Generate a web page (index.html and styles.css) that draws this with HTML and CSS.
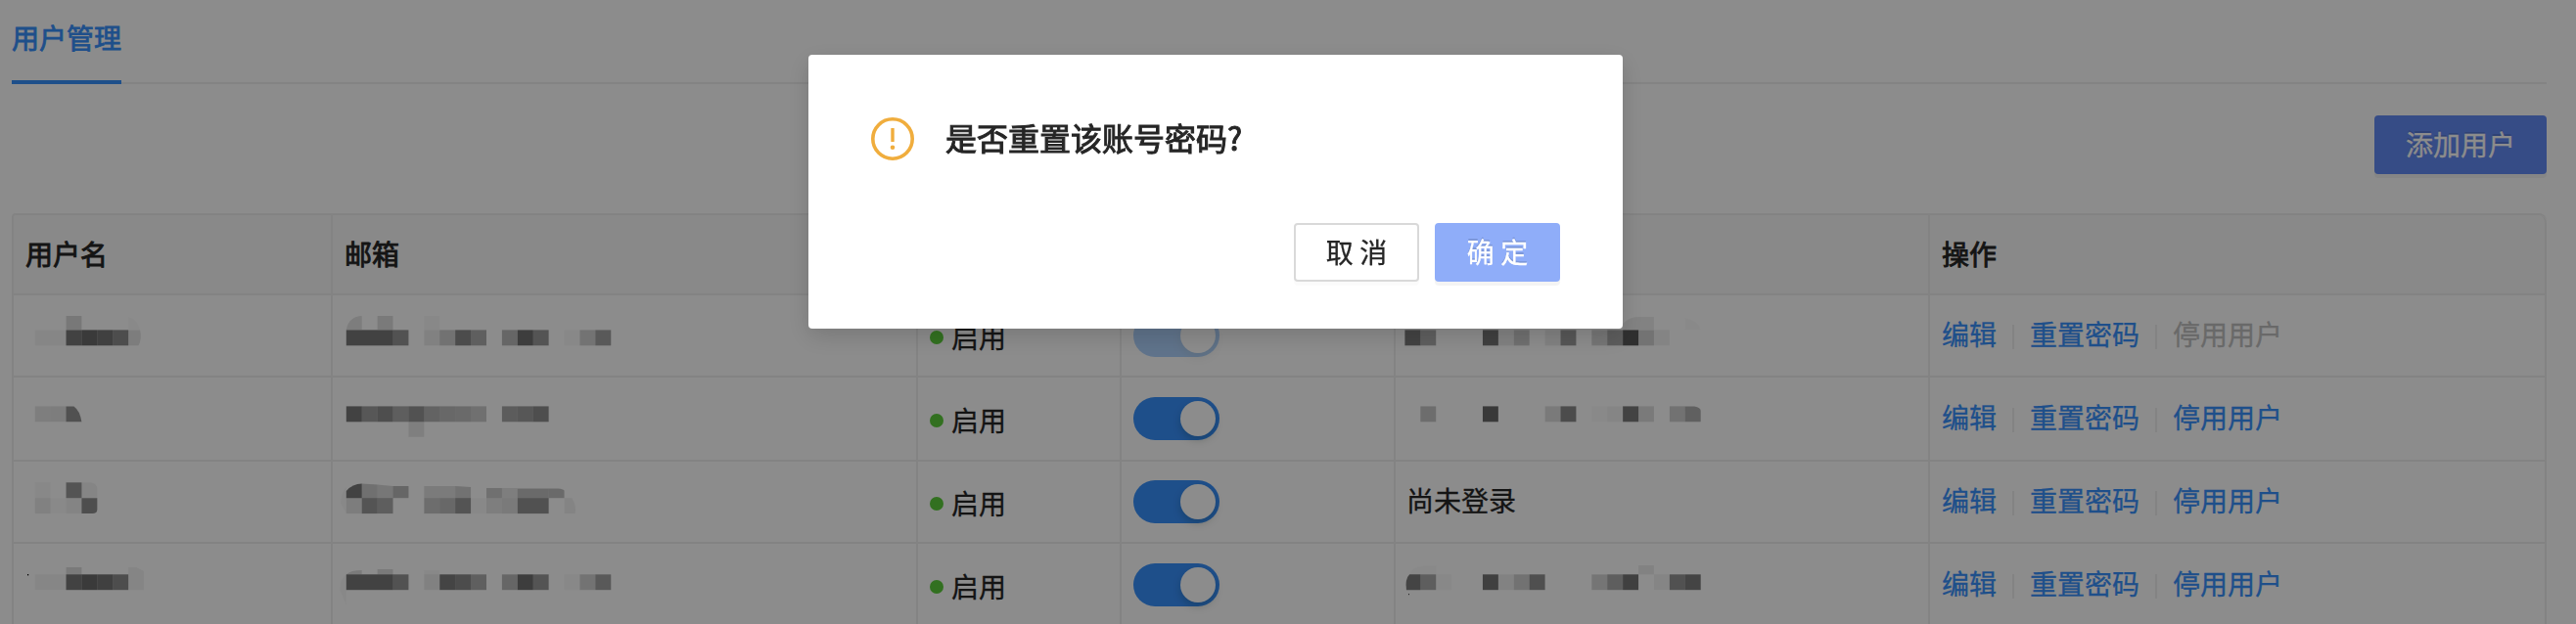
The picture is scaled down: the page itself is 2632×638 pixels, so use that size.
FILE: index.html
```html
<!DOCTYPE html>
<html lang="zh-CN">
<head>
<meta charset="utf-8">
<title>用户管理</title>
<link rel="stylesheet" href="styles.css">
</head>
<body>
<main class="page">
  <nav class="tabs"><a class="tab tab-active">用户管理</a></nav>
  <div class="toolbar"><button class="btn btn-add">添加用户</button></div>
  <section class="table">
    <div class="row row-head">
      <div class="cell">用户名</div><div class="cell">邮箱</div><div class="cell"></div><div class="cell"></div><div class="cell"></div><div class="cell">操作</div>
    </div>
    <div class="row">
      <div class="cell cell-masked"><svg class="mosaic" width="324" height="82" viewBox="14 302 324 82"><g transform="translate(35.7 0) scale(15.91 1)">
        <rect x="2" y="323" width="1" height="14" opacity=".14"/><path d="M6 324Q6.6 326 6.75 337H6z" opacity=".02"/>
        <rect x="0" y="337.4" width="2" height="15.9" opacity=".04"/><rect x="2" y="337.4" width="1" height="15.9" opacity=".53"/><rect x="3" y="337.4" width="1" height="15.9" opacity=".58"/><rect x="4" y="337.4" width="1" height="15.9" opacity=".54"/><rect x="5" y="337.4" width="1" height="15.9" opacity=".45"/><path d="M6 337.4H6.75Q6.88 346 6.65 353.3H6z" opacity=".11"/></g></svg></div>
      <div class="cell cell-masked"><svg class="mosaic" width="596" height="82" viewBox="340 302 596 82"><g transform="translate(353.8 0) scale(15.91 1)">
        <path d="M0 337C.1 328 .5 323 1 323V337z" opacity=".11"/><rect x="2" y="323" width="1" height="14" opacity=".13"/><rect x="5" y="323" width="1" height="14" opacity=".03"/>
        <rect x="0" y="337.4" width="3" height="15.9" opacity=".53"/><rect x="3" y="337.4" width="1" height="15.9" opacity=".41"/><rect x="5" y="337.4" width="1" height="15.9" opacity=".08"/><rect x="6" y="337.4" width="1" height="15.9" opacity=".19"/><rect x="7" y="337.4" width="1" height="15.9" opacity=".46"/><rect x="8" y="337.4" width="1" height="15.9" opacity=".32"/><rect x="10" y="337.4" width="1" height="15.9" opacity=".27"/><rect x="11" y="337.4" width="1" height="15.9" opacity=".56"/><rect x="12" y="337.4" width="1" height="15.9" opacity=".4"/><rect x="14" y="337.4" width="1" height="15.9" opacity=".03"/><rect x="15" y="337.4" width="1" height="15.9" opacity=".18"/><rect x="16" y="337.4" width="1" height="15.9" opacity=".36"/></g></svg></div>
      <div class="cell status"><i class="dot"></i><span class="status-text">启用</span></div>
      <div class="cell"><span class="switch switch-disabled"><i class="knob"></i></span></div>
      <div class="cell cell-masked"><svg class="mosaic" width="544" height="82" viewBox="1426 302 544 82"><g transform="translate(1435.4 0) scale(15.91 1)">
        <path d="M14 337V331Q14.4 324 15 324H16V337z" opacity=".07"/><path d="M18 325Q18.8 327 19 337H18z" opacity=".02"/>
        <rect x="0" y="337.4" width="1" height="15.9" opacity=".52"/><rect x="1" y="337.4" width="1" height="15.9" opacity=".32"/><rect x="5" y="337.4" width="1" height="15.9" opacity=".54"/><rect x="6" y="337.4" width="1" height="15.9" opacity=".07"/><rect x="7" y="337.4" width="1" height="15.9" opacity=".2"/><rect x="9" y="337.4" width="1" height="15.9" opacity=".07"/><rect x="10" y="337.4" width="1" height="15.9" opacity=".38"/><rect x="12" y="337.4" width="1" height="15.9" opacity=".16"/><rect x="13" y="337.4" width="1" height="15.9" opacity=".34"/><rect x="14" y="337.4" width="1" height="15.9" opacity=".66"/><rect x="15" y="337.4" width="1" height="15.9" opacity=".18"/><rect x="16" y="337.4" width="1" height="15.9" opacity=".06"/></g></svg></div>
      <div class="cell actions"><a>编辑</a><i class="divider"></i><a>重置密码</a><i class="divider"></i><a class="disabled">停用用户</a></div>
    </div>
    <div class="row row-tall">
      <div class="cell cell-masked"><svg class="mosaic" width="324" height="84" viewBox="14 386 324 84"><g transform="translate(35.7 0) scale(15.91 1)">
        <rect x="0" y="415.4" width="1" height="15.9" opacity=".1"/><rect x="1" y="415.4" width="1" height="15.9" opacity=".11"/><path d="M2 415.4H2.5Q2.9 420 3 431.3H2z" opacity=".42"/></g></svg></div>
      <div class="cell cell-masked"><svg class="mosaic" width="596" height="84" viewBox="340 386 596 84"><g transform="translate(353.8 0) scale(15.91 1)">
        <rect x="0" y="415.4" width="1" height="15.9" opacity=".53"/><rect x="1" y="415.4" width="1" height="15.9" opacity=".38"/><rect x="2" y="415.4" width="1" height="15.9" opacity=".44"/><rect x="3" y="415.4" width="1" height="15.9" opacity=".33"/><rect x="4" y="415.4" width="1" height="15.9" opacity=".41"/><rect x="5" y="415.4" width="1" height="15.9" opacity=".29"/><rect x="6" y="415.4" width="1" height="15.9" opacity=".26"/><rect x="7" y="415.4" width="1" height="15.9" opacity=".24"/><rect x="8" y="415.4" width="1" height="15.9" opacity=".2"/><rect x="10" y="415.4" width="1" height="15.9" opacity=".34"/><rect x="11" y="415.4" width="1" height="15.9" opacity=".38"/><rect x="12" y="415.4" width="1" height="15.9" opacity=".44"/><rect x="4" y="431.3" width="1" height="15.5" opacity=".09"/></g></svg></div>
      <div class="cell status"><i class="dot"></i><span class="status-text">启用</span></div>
      <div class="cell"><span class="switch"><i class="knob"></i></span></div>
      <div class="cell cell-masked"><svg class="mosaic" width="544" height="84" viewBox="1426 386 544 84"><g transform="translate(1435.4 0) scale(15.91 1)">
        <rect x="1" y="415.4" width="1" height="15.9" opacity=".22"/><rect x="5" y="415.4" width="1" height="15.9" opacity=".59"/><rect x="9" y="415.4" width="1" height="15.9" opacity=".13"/><rect x="10" y="415.4" width="1" height="15.9" opacity=".46"/><rect x="12" y="415.4" width="1" height="15.9" opacity=".02"/><rect x="13" y="415.4" width="1" height="15.9" opacity=".05"/><rect x="14" y="415.4" width="1" height="15.9" opacity=".52"/><rect x="15" y="415.4" width="1" height="15.9" opacity=".13"/><rect x="17" y="415.4" width="1" height="15.9" opacity=".19"/><path d="M18 415.4H18.6Q19 416.5 19 420V431.3H18z" opacity=".31"/></g></svg></div>
      <div class="cell actions"><a>编辑</a><i class="divider"></i><a>重置密码</a><i class="divider"></i><a>停用用户</a></div>
    </div>
    <div class="row">
      <div class="cell cell-masked"><svg class="mosaic" width="324" height="82" viewBox="14 472 324 82"><g transform="translate(35.7 0) scale(15.91 1)">
        <rect x="0" y="493.3" width="1" height="15.9" opacity=".03"/><rect x="2" y="493.3" width="1" height="15.9" opacity=".4"/><path d="M3 493.3H3.6Q4 495 4 500V509.2H3z" opacity=".05"/>
        <rect x="0" y="509.2" width="1" height="15.9" opacity=".08"/><rect x="1" y="509.2" width="1" height="15.9" opacity=".02"/><rect x="2" y="509.2" width="1" height="15.9" opacity=".06"/><path d="M3 509.2H4V521Q4 525.1 3.7 525.1H3z" opacity=".44"/></g></svg></div>
      <div class="cell cell-masked"><svg class="mosaic" width="596" height="82" viewBox="340 472 596 82"><g transform="translate(353.8 0) scale(15.91 1)">
        <path d="M0 509.2V502Q.4 494.5 1 494.5V509.2z" opacity=".53"/><path d="M1 494.5L2 495.5V509.2H1z" opacity=".2"/><path d="M2 495.5L3 497V509.2H2z" opacity=".15"/><rect x="3" y="497" width="1" height="12.2" opacity=".27"/><rect x="5" y="497" width="2" height="12.2" opacity=".12"/><path d="M7 497L8 498V509.2H7z" opacity=".19"/><rect x="9" y="499" width="1" height="10.2" opacity=".2"/><rect x="10" y="499" width="1" height="10.2" opacity=".1"/><rect x="11" y="499.5" width="2" height="9.7" opacity=".24"/><path d="M13 499.5H13.6Q14 500 14 502V509.2H13z" opacity=".24"/>
        <path d="M0 498Q-.35 504-.35 515L0 525.1z" opacity=".03"/><rect x="0" y="509.2" width="1" height="15.9" opacity=".11"/><rect x="1" y="509.2" width="1" height="15.9" opacity=".4"/><rect x="2" y="509.2" width="1" height="15.9" opacity=".33"/><rect x="5" y="509.2" width="1" height="15.9" opacity=".22"/><rect x="6" y="509.2" width="1" height="15.9" opacity=".26"/><rect x="7" y="509.2" width="1" height="15.9" opacity=".4"/><rect x="8" y="509.2" width="1" height="15.9" opacity=".03"/><rect x="9" y="509.2" width="1" height="15.9" opacity=".1"/><rect x="10" y="509.2" width="1" height="15.9" opacity=".13"/><rect x="11" y="509.2" width="2" height="15.9" opacity=".42"/><path d="M14 509.2H14.5Q14.8 518 14.7 525.1H14z" opacity=".06"/></g></svg></div>
      <div class="cell status"><i class="dot"></i><span class="status-text">启用</span></div>
      <div class="cell"><span class="switch"><i class="knob"></i></span></div>
      <div class="cell cell-login">尚未登录</div>
      <div class="cell actions"><a>编辑</a><i class="divider"></i><a>重置密码</a><i class="divider"></i><a>停用用户</a></div>
    </div>
    <div class="row row-tall">
      <div class="cell cell-masked"><svg class="mosaic" width="324" height="84" viewBox="14 556 324 84"><rect x="28" y="587" width="1.2" height="1.4"/><g transform="translate(35.7 0) scale(15.91 1)">
        <rect x="2" y="580" width="1" height="7.4" opacity=".13"/><path d="M6 580H6.5L7 584V603.2H6z" opacity=".05"/>
        <rect x="0" y="587.3" width="2" height="15.9" opacity=".04"/><rect x="2" y="587.3" width="1" height="15.9" opacity=".53"/><rect x="3" y="587.3" width="1" height="15.9" opacity=".58"/><rect x="4" y="587.3" width="1" height="15.9" opacity=".54"/><rect x="5" y="587.3" width="1" height="15.9" opacity=".45"/></g></svg></div>
      <div class="cell cell-masked"><svg class="mosaic" width="596" height="84" viewBox="340 556 596 84"><g transform="translate(353.8 0) scale(15.91 1)">
        <path d="M0 587.3Q.3 583 1 583V587.3z" opacity=".13"/><rect x="2" y="582" width="1" height="5.3" opacity=".13"/><rect x="5" y="583" width="1" height="4.3" opacity=".03"/><path d="M0 587.3Q-.4 592-.4 603L0 619z" opacity=".03"/>
        <rect x="0" y="587.3" width="3" height="15.9" opacity=".53"/><rect x="3" y="587.3" width="1" height="15.9" opacity=".41"/><rect x="5" y="587.3" width="1" height="15.9" opacity=".08"/><rect x="6" y="587.3" width="1" height="15.9" opacity=".51"/><rect x="7" y="587.3" width="1" height="15.9" opacity=".46"/><rect x="8" y="587.3" width="1" height="15.9" opacity=".32"/><rect x="10" y="587.3" width="1" height="15.9" opacity=".27"/><rect x="11" y="587.3" width="1" height="15.9" opacity=".56"/><rect x="12" y="587.3" width="1" height="15.9" opacity=".4"/><rect x="14" y="587.3" width="1" height="15.9" opacity=".03"/><rect x="15" y="587.3" width="1" height="15.9" opacity=".18"/><rect x="16" y="587.3" width="1" height="15.9" opacity=".36"/></g></svg></div>
      <div class="cell status"><i class="dot"></i><span class="status-text">启用</span></div>
      <div class="cell"><span class="switch"><i class="knob"></i></span></div>
      <div class="cell cell-masked"><svg class="mosaic" width="544" height="84" viewBox="1426 556 544 84"><rect x="1439" y="607" width="1" height="1.2" opacity=".7"/><g transform="translate(1435.4 0) scale(15.91 1)">
        <path d="M.3 587.3Q.5 580 1 579L2 578V587.3z" opacity=".02"/><rect x="15" y="578" width="1" height="9.3" opacity=".07"/>
        <path d="M.1 603.2Q0 592 .3 587.3H1V603.2z" opacity=".51"/><rect x="1" y="587.3" width="1" height="15.9" opacity=".33"/><rect x="2" y="587.3" width="1" height="15.9" opacity=".03"/><rect x="5" y="587.3" width="1" height="15.9" opacity=".54"/><rect x="6" y="587.3" width="1" height="15.9" opacity=".07"/><rect x="7" y="587.3" width="1" height="15.9" opacity=".19"/><rect x="8" y="587.3" width="1" height="15.9" opacity=".43"/><rect x="12" y="587.3" width="1" height="15.9" opacity=".16"/><rect x="13" y="587.3" width="1" height="15.9" opacity=".33"/><rect x="14" y="587.3" width="1" height="15.9" opacity=".54"/><rect x="16" y="587.3" width="1" height="15.9" opacity=".05"/><rect x="17" y="587.3" width="1" height="15.9" opacity=".42"/><rect x="18" y="587.3" width="1" height="15.9" opacity=".51"/></g></svg></div>
      <div class="cell actions"><a>编辑</a><i class="divider"></i><a>重置密码</a><i class="divider"></i><a>停用用户</a></div>
    </div>
  </section>
</main>
<div class="mask">
  <div class="modal" role="dialog">
    <div class="modal-body">
      <svg class="warn-icon" viewBox="0 0 44 44" width="44" height="44"><circle cx="22" cy="22" r="20.2" fill="none" stroke="#f0ad3d" stroke-width="3.6"/><path fill="#f0ad3d" d="M20.3 11.5q0-.6.6-.6h2.2q.6 0 .6.6v13q0 .6-.6.6h-2.2q-.6 0-.6-.6z"/><circle cx="22" cy="30.8" r="2.3" fill="#f0ad3d"/></svg>
      <h1 class="modal-title">是否重置该账号密码?</h1>
    </div>
    <div class="modal-footer">
      <button class="btn btn-cancel">取 消</button>
      <button class="btn btn-ok">确 定</button>
    </div>
  </div>
</div>
</body>
</html>
```

FILE: styles.css
```css
* { box-sizing: border-box; }
body {
  margin: 0;
  height: 638px;
  overflow: hidden;
  background: #fff;
  color: #262626;
  font: 28px/44px "Noto Sans CJK SC", "Noto Sans", sans-serif;
  -webkit-text-stroke: .3px currentColor;
}
.page { padding: 0 30px 0 12px; }

.tabs { height: 86px; display: flex; border-bottom: 2px solid #efefef; }
.tab { height: 86px; padding-top: 16px; -webkit-text-stroke-width: .8px; }
.tab-active { color: #3890fb; border-bottom: 4px solid #3890fb; }

.toolbar { height: 132px; padding-top: 32px; display: flex; justify-content: flex-end; }
.btn {
  height: 60px;
  padding: 0 0 2px;
  border: 2px solid transparent;
  border-radius: 4px;
  font: inherit;
  line-height: 54px;
  white-space: nowrap;
}
.btn-add {
  width: 176px;
  color: #fff;
  background: #638af5;
  border-color: #638af5;
  text-shadow: 0 -2px 0 rgba(0, 0, 0, .12);
  box-shadow: 0 4px 0 rgba(0, 0, 0, .045);
}

.table { border: 2px solid #efefef; border-width: 2px 0 0 2px; border-radius: 4px 8px 0 0; }
.row { display: grid; grid-template-columns: 326px 598px 208px 280px 546px 630px; height: 84px; }
.row-tall { height: 86px; }
.row-head { height: 82px; background: #fafafa; border-radius: 2px 8px 0 0; -webkit-text-stroke-width: .9px; }
.row-head .cell { padding-bottom: 3px; }
.row-head .cell:last-child { border-radius: 0 8px 0 0; }
.cell {
  display: flex;
  align-items: center;
  padding-left: 12px;
  border-right: 2px solid #efefef;
  border-bottom: 2px solid #efefef;
  white-space: nowrap;
}
.cell-masked { padding: 0; }
.mosaic { display: block; }

.status { gap: 8px; }
.dot { width: 14px; height: 14px; margin-top: 4px; border-radius: 50%; background: #5ccd3b; }
.status-text { margin-top: 1px; }

.switch { width: 88px; height: 44px; padding: 4px; display: flex; justify-content: flex-end; border-radius: 22px; background: #3890fb; }
.knob { width: 36px; height: 36px; border-radius: 50%; background: #fff; box-shadow: 0 4px 8px rgba(0, 35, 11, .2); }
.switch-disabled { opacity: .4; }

.cell-login { padding: 0 0 4px 11px; }

.actions { padding-bottom: 4px; color: #3890fb; }
.actions .disabled { color: #bfbfbf; }
.divider { width: 2px; height: 25px; margin: 7px 16px 0; background: #efefef; }

.mask {
  position: fixed;
  inset: 0;
  padding-top: 56px;
  background: rgba(0, 0, 0, .45);
}
.modal {
  width: 832px;
  height: 280px;
  margin-left: 826px;
  padding: 64px 64px 48px;
  display: flex;
  flex-direction: column;
  justify-content: space-between;
  border-radius: 4px;
  background: #fff;
  box-shadow: 0 8px 24px rgba(0, 0, 0, .15);
}
.modal-body { display: flex; gap: 32px; }
.modal-title { margin: 0; font-size: 32px; line-height: 40px; font-weight: 400; -webkit-text-stroke-width: 1px; }
.modal-footer { display: flex; justify-content: flex-end; gap: 16px; }
.btn-cancel { width: 128px; background: #fff; color: #262626; border-color: #d9d9d9; box-shadow: 0 4px 0 rgba(0, 0, 0, .016); }
.btn-ok {
  width: 128px;
  color: #fff;
  background: #8fadf9;
  border-color: #8fadf9;
  text-shadow: 0 -2px 0 rgba(0, 0, 0, .12);
  box-shadow: 0 4px 0 rgba(0, 0, 0, .045);
}
```
